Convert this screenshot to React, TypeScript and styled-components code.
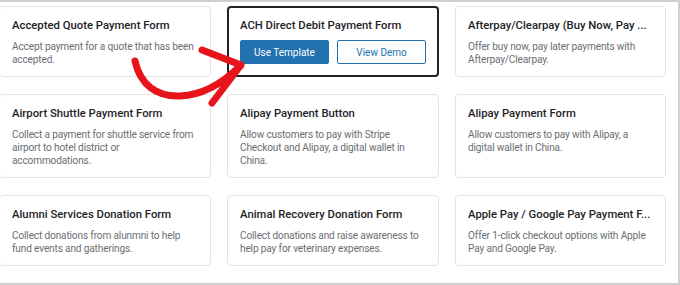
import React from 'react';
import styled, { createGlobalStyle } from 'styled-components';

const GlobalStyle = createGlobalStyle`
  html, body {
    margin: 0;
    padding: 0;
    background: #ffffff;
  }
  body {
    font-family: Roboto, "Liberation Sans", sans-serif;
  }
`;

const templates = [
    { title: 'Accepted Quote Payment Form', desc: 'Accept payment for a quote that has been accepted.' },
    { title: 'ACH Direct Debit Payment Form', desc: '', active: true },
    { title: 'Afterpay/Clearpay (Buy Now, Pay ...', desc: 'Offer buy now, pay later payments with Afterpay/Clearpay.' },
    { title: 'Airport Shuttle Payment Form', desc: 'Collect a payment for shuttle service from airport to hotel district or accommodations.' },
    { title: 'Alipay Payment Button', desc: 'Allow customers to pay with Stripe Checkout and Alipay, a digital wallet in China.' },
    { title: 'Alipay Payment Form', desc: 'Allow customers to pay with Alipay, a digital wallet in China.' },
    { title: 'Alumni Services Donation Form', desc: 'Collect donations from alunmni to help fund events and gatherings.' },
    { title: 'Animal Recovery Donation Form', desc: 'Collect donations and raise awareness to help pay for veterinary expenses.' },
    { title: 'Apple Pay / Google Pay Payment F...', desc: 'Offer 1-click checkout options with Apple Pay and Google Pay.' },
];

const App = () => {
    return (
        <>
            <GlobalStyle />
            <Frame>
                <Grid>
                    {templates.map((t) => (
                        <Card key={t.title} $active={t.active}>
                            <Title>{t.title}</Title>
                            {t.active ? (
                                <Buttons>
                                    <Button $primary>Use Template</Button>
                                    <Button>View Demo</Button>
                                </Buttons>
                            ) : (
                                <Desc>{t.desc}</Desc>
                            )}
                        </Card>
                    ))}
                    {/* next row, only its top edge shows */}
                    <Card $peek />
                    <Card $peek />
                    <Card $peek />
                </Grid>
                <Arrow viewBox="0 0 680 285" width="680" height="285">
                    <path
                        d="M135 61 C 140 84, 156 97, 180 96 C 204 95, 224 82, 240 66"
                        fill="none"
                        stroke="#e8141b"
                        strokeWidth="7"
                        strokeLinecap="round"
                    />
                    <path
                        d="M202 50 L 241 65 L 212 103"
                        fill="none"
                        stroke="#e8141b"
                        strokeWidth="7"
                        strokeLinecap="round"
                        strokeLinejoin="round"
                    />
                </Arrow>
            </Frame>
        </>
    );
};

const Frame = styled.div`
    position: relative;
    box-sizing: border-box;
    width: 680px;
    height: 285px;
    overflow: hidden;
    border-top: 2px solid #cfcfcf;
    border-right: 2px solid #cfcfcf;
    border-bottom: 2px solid #cfcfcf;
`;

const Grid = styled.div`
    display: grid;
    grid-template-columns: 212px 212px 211px;
    column-gap: 16px;
    row-gap: 17px;
    margin-left: -1px;
    padding-top: 4px;
`;

const Card = styled.div<{ $active?: boolean; $peek?: boolean }>`
    box-sizing: border-box;
    min-width: 0;
    min-height: ${(p) => (p.$peek ? '70px' : '0')};
    background: #ffffff;
    border: ${(p) => (p.$active ? '2px solid #1d2327' : '1px solid #e4e4e4')};
    border-radius: 4px;
    padding: ${(p) => (p.$active ? '10px 11px 11px 11px' : '11px 12px 10px 12px')};
`;

const Title = styled.div`
    font-size: 11.3px;
    font-weight: 500;
    line-height: 16px;
    color: #1d2327;
    white-space: nowrap;
    overflow: hidden;
    margin-bottom: 6px;
`;

const Desc = styled.div`
    font-size: 10.1px;
    letter-spacing: -0.15px;
    line-height: 13px;
    color: #6b6e72;
`;

const Buttons = styled.div`
    display: flex;
    gap: 8px;
`;

const Button = styled.div<{ $primary?: boolean }>`
    box-sizing: border-box;
    width: 90px;
    height: 24px;
    display: flex;
    align-items: center;
    justify-content: center;
    font-size: 10px;
    border-radius: 2px;
    border: 1px solid #2271b1;
    background: ${(p) => (p.$primary ? '#2271b1' : '#ffffff')};
    color: ${(p) => (p.$primary ? '#ffffff' : '#2271b1')};
`;

const Arrow = styled.svg`
    position: absolute;
    top: -2px;
    left: 0;
    pointer-events: none;
`;

export default App;
